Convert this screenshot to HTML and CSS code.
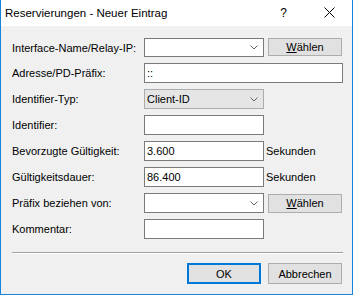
FILE: index.html
```html
<!DOCTYPE html>
<html lang="de">
<head>
    <meta charset="UTF-8">
    <title>Reservierungen - Neuer Eintrag</title>
    <link rel="stylesheet" href="styles.css">
</head>
<body>
    <div class="dialog">
        <div class="titlebar">
            <span class="title">Reservierungen - Neuer Eintrag</span>
            <span class="help">?</span>
            <svg class="close" width="11" height="11" viewBox="0 0 11 11">
                <path d="M0.5 0.5 L10.5 10.5 M10.5 0.5 L0.5 10.5" stroke="#000" stroke-width="1" fill="none"/>
            </svg>
        </div>
        <div class="content">
            <div class="form">
                <label>Interface-Name/Relay-IP:</label>
                <div class="combo first"><span class="value"></span><svg class="chevron" width="8" height="5" viewBox="0 0 8 5"><path d="M0.5 0.5 L4 4 L7.5 0.5" stroke="#606060" fill="none"/></svg></div>
                <button class="btn small first"><u>W</u>ählen</button>

                <label>Adresse/PD-Präfix:</label>
                <div class="field wide">::</div>

                <label>Identifier-Typ:</label>
                <div class="combo readonly"><span class="value">Client-ID</span><svg class="chevron" width="8" height="5" viewBox="0 0 8 5"><path d="M0.5 0.5 L4 4 L7.5 0.5" stroke="#606060" fill="none"/></svg></div>
                <span></span>

                <label>Identifier:</label>
                <div class="field"></div>
                <span></span>

                <label>Bevorzugte Gültigkeit:</label>
                <div class="field">3.600</div>
                <span class="unit">Sekunden</span>

                <label>Gültigkeitsdauer:</label>
                <div class="field">86.400</div>
                <span class="unit">Sekunden</span>

                <label>Präfix beziehen von:</label>
                <div class="combo"><span class="value"></span><svg class="chevron" width="8" height="5" viewBox="0 0 8 5"><path d="M0.5 0.5 L4 4 L7.5 0.5" stroke="#606060" fill="none"/></svg></div>
                <button class="btn small"><u>W</u>ählen</button>

                <label>Kommentar:</label>
                <div class="field"></div>
                <span></span>
            </div>
            <div class="separator"></div>
            <div class="actions">
                <button class="btn default">OK</button>
                <button class="btn">Abbrechen</button>
            </div>
        </div>
    </div>
</body>
</html>
```

FILE: styles.css
```css
body {
    margin: 0;
    padding: 0;
    font-family: 'Liberation Sans', Arial, sans-serif;
    font-size: 11px;
    color: #000;
    background: #f0f0f0;
}

.dialog {
    width: 353px;
    height: 295px;
    box-sizing: border-box;
    border: 1px solid #1883d7;
    border-top: none;
    background: #f0f0f0;
    display: flex;
    flex-direction: column;
}

.titlebar {
    height: 26px;
    background: #fff;
    display: flex;
    align-items: center;
    padding-left: 4px;
    flex-shrink: 0;
}

.title {
    flex: 1;
    font-size: 11.5px;
    margin-top: -1px;
}

.help {
    font-size: 12px;
    margin-right: 37px;
    margin-top: -1px;
}

.close {
    margin-right: 17px;
    margin-top: -1px;
}

.content {
    padding: 12px 10px 0 11px;
}

.form {
    display: grid;
    grid-template-columns: 132px 120px auto;
    grid-template-rows: 19px;
    grid-auto-rows: 20px;
    row-gap: 6px;
    align-items: center;
}

.form label {
    white-space: nowrap;
}

.field, .combo {
    height: 20px;
    box-sizing: border-box;
    border: 1px solid #7a7a7a;
    background: #fff;
    padding: 0 2px;
    line-height: 18px;
    white-space: nowrap;
}

.combo.first {
    height: 19px;
}

.field.wide {
    grid-column: 2 / 4;
    width: 199px;
}

.combo {
    display: flex;
    align-items: center;
    justify-content: space-between;
    padding-right: 5px;
}

.combo.readonly {
    background: #e5e5e5;
    border-color: #acacac;
}

.unit {
    padding-left: 2px;
}

.btn {
    font-family: inherit;
    font-size: 11px;
    color: #000;
    background: #e1e1e1;
    border: 1px solid #adadad;
    width: 74px;
    height: 21px;
    padding: 0;
    box-sizing: border-box;
}

.btn.small {
    height: 19px;
    margin-left: 4px;
}

.btn.small.first {
    align-self: start;
    height: 18px;
}

.btn.default {
    border: 2px solid #0078d7;
}

.separator {
    margin-top: 13px;
    height: 1px;
    border-top: 1px solid #a0a0a0;
    background: #fff;
    width: 331px;
}

.actions {
    display: flex;
    justify-content: flex-end;
    gap: 7px;
    margin-top: 9px;
}
```
